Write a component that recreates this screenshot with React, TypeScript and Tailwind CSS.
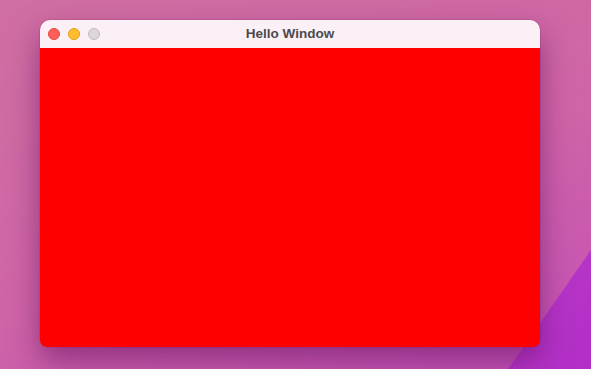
import React from "react";

export default function App() {
  return (
    <div className="relative w-[591px] h-[369px] overflow-hidden bg-[linear-gradient(160deg,#d06fa2_0%,#cf64a6_55%,#c450b8_100%)]">
      <svg className="absolute inset-0" width="591" height="369" viewBox="0 0 591 369">
        <defs>
          <linearGradient id="pg" x1="0" y1="0" x2="1" y2="1">
            <stop offset="0" stopColor="#b93ac6" />
            <stop offset="1" stopColor="#b22ec8" />
          </linearGradient>
        </defs>
        <polygon points="591,250 508,369 591,369" fill="url(#pg)" />
      </svg>
      <div className="relative pl-[40px] pt-[20px]">
        <div className="w-[500px] h-[327px] rounded-t-[10px] rounded-b-[7px] overflow-hidden flex flex-col shadow-[0_14px_30px_rgba(95,15,95,0.55),0_0_0_0.5px_rgba(120,40,100,0.35)]">
          <div className="relative h-[28px] bg-[#fbf0f6] flex items-center px-[8px] gap-[8px] shrink-0">
            <span className="w-[12px] h-[12px] rounded-full bg-[#fe5f57] border-[0.5px] border-[#e2463f]" />
            <span className="w-[12px] h-[12px] rounded-full bg-[#febc2e] border-[0.5px] border-[#e1a116]" />
            <span className="w-[12px] h-[12px] rounded-full bg-[#ddd6dc] border border-[#c4bac3]" />
            <div className="absolute inset-0 flex items-center justify-center pointer-events-none">
              <span className="text-[13.5px] font-bold text-[#4d4a4d] font-['Liberation_Sans',Arial,sans-serif]">
                Hello Window
              </span>
            </div>
          </div>
          <div className="flex-1 bg-[#ff0000]" />
        </div>
      </div>
    </div>
  );
}
